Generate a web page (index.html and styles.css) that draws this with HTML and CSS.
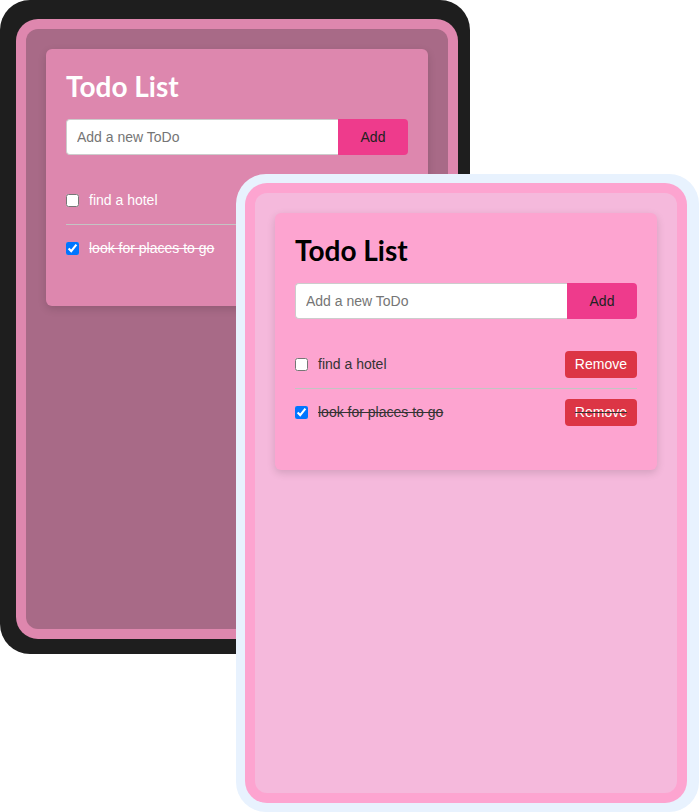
FILE: index.html
```html
<!DOCTYPE html>
<html lang="en">
<head>
    <meta charset="UTF-8">
    <meta name="viewport" content="width=device-width, initial-scale=1.0">
    <title>Todo List</title>
    <link rel="stylesheet" href="styles.css">
</head>
<body>
    <div class="stage">
        <!-- dark theme device -->
        <div class="device dark">
            <div class="bezel">
                <div class="screen">
                    <div class="card">
                        <h1>Todo List</h1>
                        <div class="add-form">
                            <input type="text" placeholder="Add a new ToDo">
                            <button class="add-btn">Add</button>
                        </div>
                        <ul class="todos">
                            <li><input type="checkbox"><span class="text">find a hotel</span><button class="remove">Remove</button></li>
                            <li class="done"><input type="checkbox" checked><span class="text">look for places to go</span><button class="remove">Remove</button></li>
                        </ul>
                    </div>
                </div>
            </div>
        </div>

        <!-- light theme device, lies over the dark one -->
        <div class="device light">
            <div class="bezel">
                <div class="screen">
                    <div class="card">
                        <h1>Todo List</h1>
                        <div class="add-form">
                            <input type="text" placeholder="Add a new ToDo">
                            <button class="add-btn">Add</button>
                        </div>
                        <ul class="todos">
                            <li><input type="checkbox"><span class="text">find a hotel</span><button class="remove">Remove</button></li>
                            <li class="done"><input type="checkbox" checked><span class="text">look for places to go</span><button class="remove">Remove</button></li>
                        </ul>
                    </div>
                </div>
            </div>
        </div>
    </div>
</body>
</html>
```

FILE: styles.css
```css
body{
    margin: 0;
    background: #fff;
    font-family: "Liberation Sans", Arial, sans-serif;
}
.stage{
    position: relative;
    width: 699px;
    height: 812px;
    overflow: hidden;
}
.device{
    display: inline-block;
    border-radius: 30px;
}
.bezel{
    padding: 10px;
    border-radius: 22px;
}
.screen{
    width: 422px;
    height: 600px;
    box-sizing: border-box;
    padding: 20px;
    border-radius: 12px;
}
.card{
    padding: 20px;
    border-radius: 6px;
    box-shadow: 0 3px 8px rgba(0, 0, 0, 0.14);
}

/* dark */
.dark{
    background: #1e1e1e;
    padding: 19px 12px 15px 16px;
}
.dark .bezel{
    background: #de87ae;
}
.dark .screen{
    background: #a86a87;
}
.dark .card{
    background: #dd87ae;
    color: #fff;
}

/* light */
.light{
    position: absolute;
    left: 236px;
    top: 174px;
    background: #e8f2fe;
    padding: 9px 12px 9px 9px;
}
.light .bezel{
    background: #fda4d0;
}
.light .screen{
    background: #f5b9dc;
}
.light .card{
    background: #fda4d0;
    color: #333;
}
.light h1{
    color: #000;
}

h1{
    margin: 1px 0 15px;
    font-family: Lato, "Liberation Sans", sans-serif;
    font-weight: 700;
    font-size: 28px;
    line-height: 1.2;
}
.add-form{
    display: flex;
}
.add-form input{
    flex: 1;
    height: 36px;
    box-sizing: border-box;
    padding: 0 10px;
    border: 1px solid #ccc;
    border-right: none;
    border-radius: 4px 0 0 4px;
    font-family: "Liberation Sans", Arial, sans-serif;
    font-size: 14px;
    background: #fff;
}
.add-btn{
    width: 70px;
    height: 36px;
    border: none;
    border-radius: 0 4px 4px 0;
    background: #ee3b8c;
    color: #222;
    font-family: "Liberation Sans", Arial, sans-serif;
    font-size: 14px;
}
.todos{
    list-style: none;
    margin: 22px 0 14px;
    padding: 0;
}
.todos li{
    display: flex;
    align-items: center;
    padding: 10px 0;
    border-bottom: 1px solid #c4c4c4;
    font-size: 14px;
}
.todos li:last-child{
    border-bottom: none;
}
.todos input{
    width: 13px;
    height: 13px;
    margin: 0 10px 0 0;
}
.todos .text{
    flex: 1;
}
.done{
    text-decoration: line-through;
}
.remove{
    padding: 5px 10px;
    border: none;
    border-radius: 4px;
    background: #dc3545;
    color: #fff;
    font-family: "Liberation Sans", Arial, sans-serif;
    font-size: 14px;
    line-height: 17px;
}
```
